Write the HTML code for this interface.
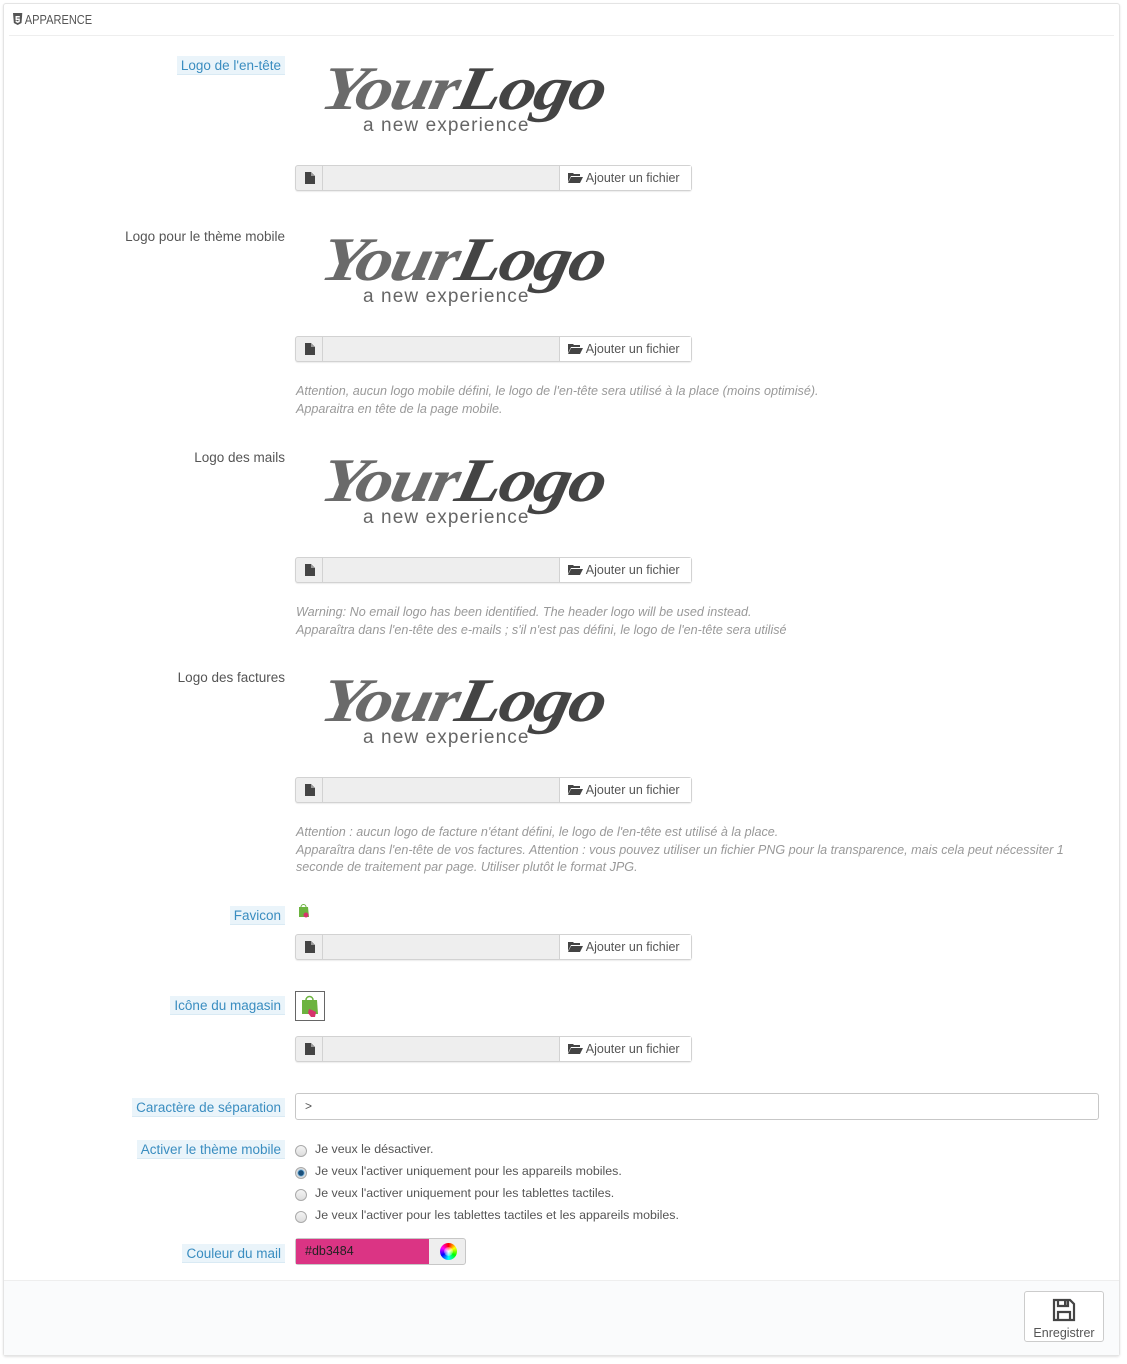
<!DOCTYPE html>
<html><head><meta charset="utf-8">
<style>
*{box-sizing:border-box;margin:0;padding:0}
body{width:1127px;height:1364px;background:#fff;font-family:"Liberation Sans",sans-serif;position:relative;overflow:hidden;color:#555}
.panel{position:absolute;left:3px;top:3px;width:1117px;height:1353px;border:1px solid #e4e4e4;border-radius:3px;box-shadow:0 1px 2px rgba(0,0,0,.12);background:#fff}
.hd{position:absolute;left:9px;top:9px;width:1105px;height:27px;border-bottom:1px solid #eee;font-size:13px;color:#555;padding-left:4px;line-height:22px}
.hd span{display:inline-block;transform:scaleX(.85);transform-origin:left}
.foot{position:absolute;left:4px;top:1280px;width:1115px;height:75px;background:#fafbfc;border-top:1px solid #eee}
.a{position:absolute}
.lbl{position:absolute;right:842px;font-size:13.5px;height:19px;line-height:19px;padding:0 4px;white-space:nowrap}
.tip{background:#eaf4fa;color:#3a8dc0;border-bottom:1px solid #d9eaf4}
.plain{color:#555;padding:0}
.logo{position:absolute;left:322px;width:280px;height:80px}
.logo .s{position:absolute;left:0;top:-6px;font-family:"Liberation Serif",serif;font-style:italic;font-weight:bold;font-size:62px;color:#6a6a6a;letter-spacing:-2px;white-space:nowrap;transform:scaleX(1.2) skewX(-10deg);transform-origin:left}
.logo .s b{color:#444}
.logo .t{position:absolute;left:41px;top:55px;font-size:19px;color:#666;letter-spacing:1.1px;white-space:nowrap}
.file{position:absolute;left:295px;width:397px;height:26px;border:1px solid #d2d2d2;border-radius:3px;background:#eee;box-shadow:0 1px 1px rgba(0,0,0,.08)}
.file .ic{position:absolute;left:0;top:0;width:27px;height:24px;border-right:1px solid #d2d2d2}
.file .btn{position:absolute;left:263px;top:0;width:132px;height:24px;background:#fff;border-left:1px solid #d2d2d2;font-size:12.5px;color:#555;line-height:25px;padding-left:8px;white-space:nowrap}
.help{position:absolute;left:296px;font-size:12.6px;font-style:italic;color:#999;line-height:17.5px;white-space:nowrap}
.radio{position:absolute;left:295px;width:12px;height:12px;border-radius:50%;border:1px solid #aaa;background:linear-gradient(#f4f4f4,#ddd)}
.rt{position:absolute;left:315px;font-size:12.4px;color:#555}
</style></head><body>
<div class="panel"></div>
<div class="hd"><span><svg width="11" height="12" viewBox="0 0 11 12" style="vertical-align:-1px"><path d="M0 0h11l-1 10-4.5 2L1 10z" fill="#555"/><path d="M3 3h5v1.5H4.5v1H8V9L5.5 10 3 9V7.5h1.5v.5l1 .3 1-.3V7H3z" fill="#fff"/></svg> APPARENCE</span></div>

<div class="lbl tip" style="top:56px">Logo de l'en-tête</div>
<div class="logo" style="top:60px"><div class="s">Your<b>Logo</b></div><div class="t">a new experience</div></div>
<div class="file" style="top:165px"><svg class="a" style="left:9px;top:6px" width="10" height="12"><path d="M0 0h6l4 4v8H0z" fill="#444"/><path d="M6 0v4h4" fill="#999"/></svg><div class="ic"></div><div class="btn"><svg width="15" height="11" viewBox="0 0 15 11" style="vertical-align:-1px"><path d="M0 1h5l1 1h6v2H3L0 10z" fill="#444"/><path d="M3 5h12l-3 6H0z" fill="#444"/></svg> Ajouter un fichier</div></div>

<div class="lbl plain" style="top:227px">Logo pour le thème mobile</div>
<div class="logo" style="top:231px"><div class="s">Your<b>Logo</b></div><div class="t">a new experience</div></div>
<div class="file" style="top:336px"><svg class="a" style="left:9px;top:6px" width="10" height="12"><path d="M0 0h6l4 4v8H0z" fill="#444"/><path d="M6 0v4h4" fill="#999"/></svg><div class="ic"></div><div class="btn"><svg width="15" height="11" viewBox="0 0 15 11" style="vertical-align:-1px"><path d="M0 1h5l1 1h6v2H3L0 10z" fill="#444"/><path d="M3 5h12l-3 6H0z" fill="#444"/></svg> Ajouter un fichier</div></div>
<div class="help" style="top:383px">Attention, aucun logo mobile défini, le logo de l'en-tête sera utilisé à la place (moins optimisé).<br>Apparaitra en tête de la page mobile.</div>

<div class="lbl plain" style="top:448px">Logo des mails</div>
<div class="logo" style="top:452px"><div class="s">Your<b>Logo</b></div><div class="t">a new experience</div></div>
<div class="file" style="top:557px"><svg class="a" style="left:9px;top:6px" width="10" height="12"><path d="M0 0h6l4 4v8H0z" fill="#444"/><path d="M6 0v4h4" fill="#999"/></svg><div class="ic"></div><div class="btn"><svg width="15" height="11" viewBox="0 0 15 11" style="vertical-align:-1px"><path d="M0 1h5l1 1h6v2H3L0 10z" fill="#444"/><path d="M3 5h12l-3 6H0z" fill="#444"/></svg> Ajouter un fichier</div></div>
<div class="help" style="top:604px">Warning: No email logo has been identified. The header logo will be used instead.<br>Apparaîtra dans l'en-tête des e-mails ; s'il n'est pas défini, le logo de l'en-tête sera utilisé</div>

<div class="lbl plain" style="top:668px">Logo des factures</div>
<div class="logo" style="top:672px"><div class="s">Your<b>Logo</b></div><div class="t">a new experience</div></div>
<div class="file" style="top:777px"><svg class="a" style="left:9px;top:6px" width="10" height="12"><path d="M0 0h6l4 4v8H0z" fill="#444"/><path d="M6 0v4h4" fill="#999"/></svg><div class="ic"></div><div class="btn"><svg width="15" height="11" viewBox="0 0 15 11" style="vertical-align:-1px"><path d="M0 1h5l1 1h6v2H3L0 10z" fill="#444"/><path d="M3 5h12l-3 6H0z" fill="#444"/></svg> Ajouter un fichier</div></div>
<div class="help" style="top:824px">Attention : aucun logo de facture n'étant défini, le logo de l'en-tête est utilisé à la place.<br>Apparaîtra dans l'en-tête de vos factures. Attention : vous pouvez utiliser un fichier PNG pour la transparence, mais cela peut nécessiter 1<br>seconde de traitement par page. Utiliser plutôt le format JPG.</div>

<div class="lbl tip" style="top:906px">Favicon</div>
<svg class="a" style="left:298px;top:903px" width="12" height="16"><path d="M1 4h9l1 10H1z" fill="#6cb33f"/><path d="M3 4a2.5 2.5 0 015 0" stroke="#6cb33f" fill="none"/><circle cx="8" cy="12" r="2.5" fill="#d6336c"/></svg>
<div class="file" style="top:934px"><svg class="a" style="left:9px;top:6px" width="10" height="12"><path d="M0 0h6l4 4v8H0z" fill="#444"/><path d="M6 0v4h4" fill="#999"/></svg><div class="ic"></div><div class="btn"><svg width="15" height="11" viewBox="0 0 15 11" style="vertical-align:-1px"><path d="M0 1h5l1 1h6v2H3L0 10z" fill="#444"/><path d="M3 5h12l-3 6H0z" fill="#444"/></svg> Ajouter un fichier</div></div>

<div class="lbl tip" style="top:996px">Icône du magasin</div>
<div class="a" style="left:295px;top:991px;width:30px;height:30px;border:1px solid #666;background:#fff"></div>
<svg class="a" style="left:300px;top:994px" width="20" height="25"><path d="M2 6h15l1 14H2z" fill="#6cb33f"/><path d="M6 6a3.5 3.5 0 017 0" stroke="#6cb33f" fill="none" stroke-width="1.5"/><path d="M9 15l3 1 4 2-1 5h-4l-3-4z" fill="#d6336c"/></svg>
<div class="file" style="top:1036px"><svg class="a" style="left:9px;top:6px" width="10" height="12"><path d="M0 0h6l4 4v8H0z" fill="#444"/><path d="M6 0v4h4" fill="#999"/></svg><div class="ic"></div><div class="btn"><svg width="15" height="11" viewBox="0 0 15 11" style="vertical-align:-1px"><path d="M0 1h5l1 1h6v2H3L0 10z" fill="#444"/><path d="M3 5h12l-3 6H0z" fill="#444"/></svg> Ajouter un fichier</div></div>

<div class="lbl tip" style="top:1098px">Caractère de séparation</div>
<div class="a" style="left:295px;top:1093px;width:804px;height:27px;border:1px solid #c7c7c7;border-radius:3px;background:#fff;font-size:12px;line-height:25px;padding-left:9px;color:#555">&gt;</div>

<div class="lbl tip" style="top:1140px">Activer le thème mobile</div>
<div class="radio" style="top:1145px"></div><div class="rt" style="top:1142px">Je veux le désactiver.</div>
<div class="radio" style="top:1167px;background:radial-gradient(circle,#1b4f7a 0 2.5px,#6ab0e0 3px,#ddd 4px)"></div><div class="rt" style="top:1164px">Je veux l'activer uniquement pour les appareils mobiles.</div>
<div class="radio" style="top:1189px"></div><div class="rt" style="top:1186px">Je veux l'activer uniquement pour les tablettes tactiles.</div>
<div class="radio" style="top:1211px"></div><div class="rt" style="top:1208px">Je veux l'activer pour les tablettes tactiles et les appareils mobiles.</div>

<div class="lbl tip" style="top:1244px">Couleur du mail</div>
<div class="a" style="left:295px;top:1238px;width:171px;height:27px;border:1px solid #c7c7c7;border-radius:3px;background:#eee"></div>
<div class="a" style="left:296px;top:1239px;width:133px;height:25px;background:#db3484;font-size:12.5px;line-height:25px;padding-left:9px;color:#222">#db3484</div>
<div class="a" style="left:440px;top:1243px;width:17px;height:17px;border-radius:50%;background:conic-gradient(#f00,#ff0,#0f0,#0ff,#00f,#f0f,#f00)"><div style="position:absolute;left:4px;top:4px;width:9px;height:9px;border-radius:50%;background:radial-gradient(#fff,rgba(255,255,255,0))"></div></div>

<div class="foot"></div>
<div class="a" style="left:1024px;top:1291px;width:80px;height:51px;border:1px solid #ccc;border-radius:3px;background:#fff;text-align:center;font-size:12.5px;color:#555">
<svg style="margin-top:6px" width="24" height="24" viewBox="0 0 24 24"><path d="M2 2h16l4 4v16H2z" fill="none" stroke="#444" stroke-width="2.2"/><path d="M6 2v6h10V2" fill="none" stroke="#444" stroke-width="2.2"/><rect x="12" y="3" width="2.5" height="4" fill="#444"/><path d="M6 22v-8h12v8" fill="none" stroke="#444" stroke-width="2.2"/></svg>
<div style="margin-top:1px">Enregistrer</div></div>
</body></html>
